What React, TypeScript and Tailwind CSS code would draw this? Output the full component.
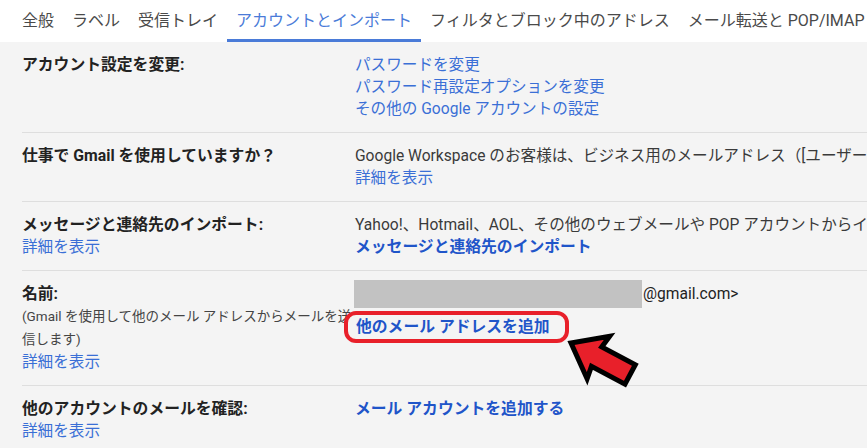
import React from "react";

const tabs = [
  "全般",
  "ラベル",
  "受信トレイ",
  "アカウントとインポート",
  "フィルタとブロック中のアドレス",
  "メール転送と POP/IMAP",
];

function Link({ children, bold }: { children: React.ReactNode; bold?: boolean }) {
  return (
    <a
      className={
        bold
          ? "block text-[15.8px] font-bold text-[#1f55c9] cursor-pointer whitespace-nowrap"
          : "block text-[#3a6fd6] cursor-pointer whitespace-nowrap"
      }
    >
      {children}
    </a>
  );
}

function Label({ children }: { children: React.ReactNode }) {
  return <div className="text-[15.8px] font-bold text-[#222] whitespace-nowrap">{children}</div>;
}

function Row({ label, children }: { label: React.ReactNode; children: React.ReactNode }) {
  return (
    <div className="ml-[22px] flex border-b border-[#dedede] pt-[12px] pb-[12px]">
      <div className="w-[333px] shrink-0">{label}</div>
      <div className="min-w-0 flex-1">{children}</div>
    </div>
  );
}

export default function App() {
  return (
    <div
      className="relative h-[448px] w-[867px] overflow-hidden bg-[#f4f4f4] text-[15.6px] leading-[22px] text-[#3a3a3a]"
      style={{ fontFamily: 'Roboto, "Noto Sans CJK JP", sans-serif' }}
    >
      {/* タブ */}
      <div className="flex h-[42px] bg-white pl-[13px] text-[16px]">
        {tabs.map((t, i) => (
          <div
            key={t}
            className={
              i === 3
                ? "flex items-center border-b-[3px] border-[#4a7bd8] px-[9px] pt-[3px] text-[#4a7bd8] whitespace-nowrap"
                : "flex items-center border-b-[3px] border-transparent px-[9px] pt-[3px] text-[#4a4a4a] whitespace-nowrap"
            }
          >
            {t}
          </div>
        ))}
      </div>

      <Row label={<Label>アカウント設定を変更:</Label>}>
        <Link>パスワードを変更</Link>
        <Link>パスワード再設定オプションを変更</Link>
        <Link>その他の Google アカウントの設定</Link>
      </Row>

      <Row label={<Label>仕事で Gmail を使用していますか？</Label>}>
        <div className="whitespace-nowrap">
          Google Workspace のお客様は、ビジネス用のメールアドレス（[ユーザー名]@[会社名].com）をご利用いただけます。
        </div>
        <Link>詳細を表示</Link>
      </Row>

      <Row
        label={
          <>
            <Label>メッセージと連絡先のインポート:</Label>
            <Link>詳細を表示</Link>
          </>
        }
      >
        <div className="whitespace-nowrap">
          Yahoo!、Hotmail、AOL、その他のウェブメールや POP アカウントからインポートします。
        </div>
        <Link bold>メッセージと連絡先のインポート</Link>
      </Row>

      <Row
        label={
          <>
            <Label>名前:</Label>
            <div className="whitespace-nowrap text-[13.5px] leading-[23px] text-[#444]">
              (Gmail を使用して他のメール アドレスからメールを送
              <br />
              信します)
            </div>
            <Link>詳細を表示</Link>
          </>
        }
      >
        <div className="-mt-[3px] flex items-center">
          <div className="-ml-[1px] h-[28px] w-[288px] bg-[#c2c2c2]" />
          <span className="ml-[1px] text-[#222]">@gmail.com&gt;</span>
        </div>
        <div className="relative mt-[3px] -ml-[11px] inline-block rounded-[12px] border-[4px] border-[#e8202a] bg-[#f4f4f4] py-[1px] pl-[8px] pr-[15px]">
          <Link bold>他のメール アドレスを追加</Link>
        </div>
      </Row>

      <Row
        label={
          <>
            <Label>他のアカウントのメールを確認:</Label>
            <Link>詳細を表示</Link>
          </>
        }
      >
        <Link bold>メール アカウントを追加する</Link>
      </Row>

      {/* 注目の矢印 */}
      <svg className="pointer-events-none absolute left-0 top-0" width="867" height="448">
        <g transform="translate(571 343) rotate(28)">
          <polygon
            points="0,0 31,-24 29,-11 67,-11 67,11 29,11 31,24"
            fill="#e8202a"
            stroke="#000"
            strokeWidth="5"
            strokeLinejoin="miter"
          />
        </g>
      </svg>
    </div>
  );
}
